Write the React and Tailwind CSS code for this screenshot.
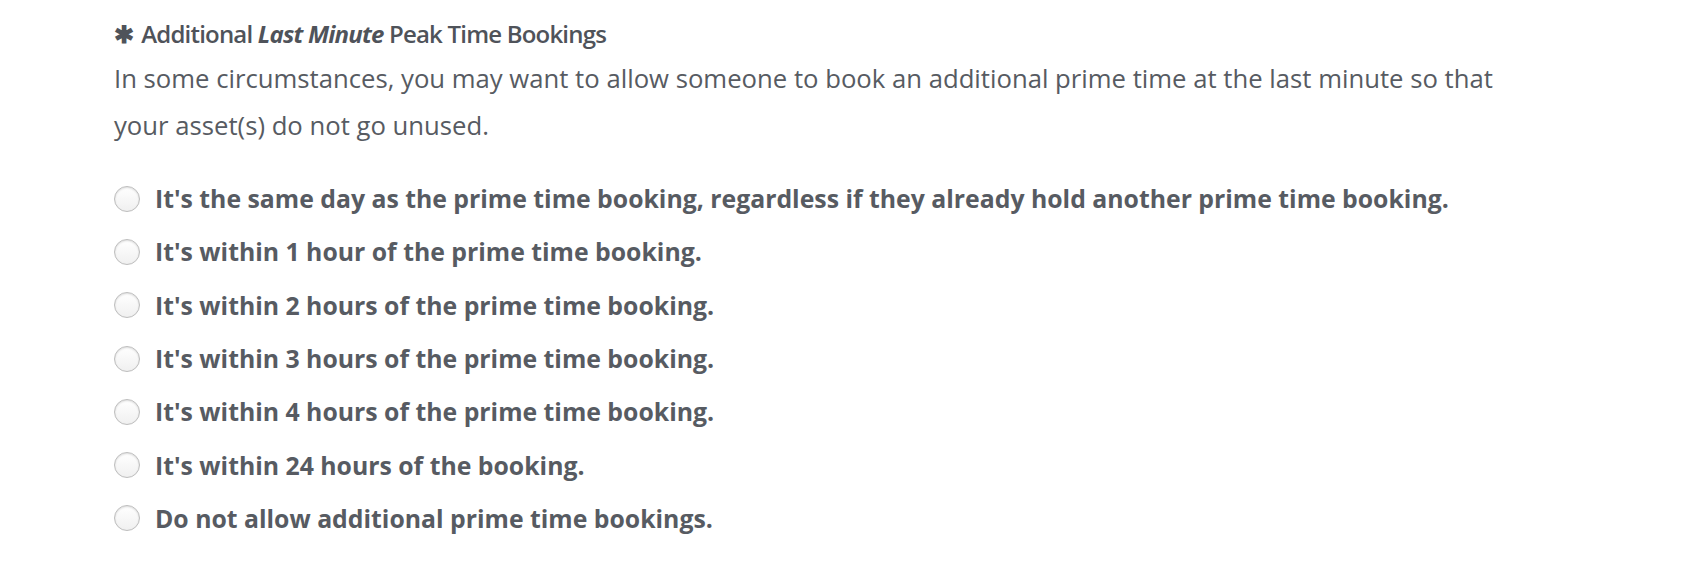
export default function App() {
  const options = [
    "It's the same day as the prime time booking, regardless if they already hold another prime time booking.",
    "It's within 1 hour of the prime time booking.",
    "It's within 2 hours of the prime time booking.",
    "It's within 3 hours of the prime time booking.",
    "It's within 4 hours of the prime time booking.",
    "It's within 24 hours of the booking.",
    "Do not allow additional prime time bookings.",
  ];
  return (
    <div className="w-[1702px] h-[562px] bg-white text-[#575b62] pl-[114px] pt-[19px]" style={{ fontFamily: '"Open Sans", sans-serif' }}>
      <div className="text-[24px] font-semibold tracking-[-0.8px] leading-[30px] text-[#4f535a]">
        <span className="mr-[8px]">✱</span>Additional <em className="font-bold">Last Minute</em> Peak Time Bookings
      </div>
      <p className="text-[25.7px] leading-[47px] mt-[6px] w-[1420px]">
        In some circumstances, you may want to allow someone to book an additional prime time at the last minute so that your asset(s) do not go unused.
      </p>
      <div className="mt-[23px] flex flex-col">
        {options.map((o, i) => (
          <label key={i} className="flex items-center h-[53.3px] gap-[15px]">
            <span className="w-[26px] h-[26px] rounded-full border border-[#bdbdbd] bg-gradient-to-b from-[#ffffff] to-[#f0f0f0] shadow-[inset_0_1px_2px_rgba(0,0,0,0.14)] shrink-0" />
            <span className="text-[24.8px] font-bold">{o}</span>
          </label>
        ))}
      </div>
    </div>
  );
}
